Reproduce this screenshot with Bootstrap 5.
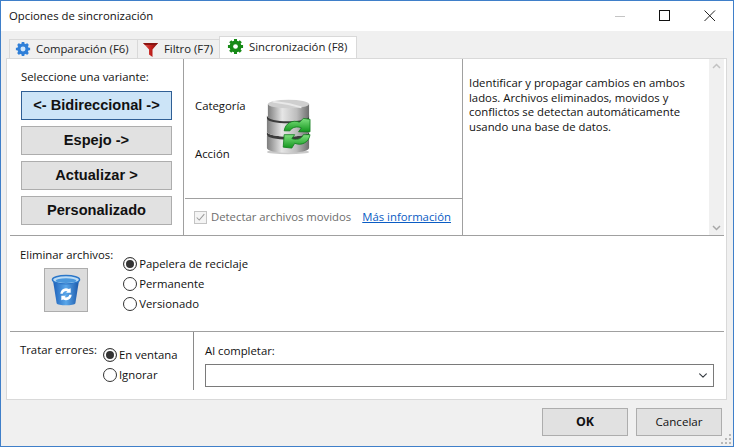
<!DOCTYPE html>
<html lang="es">
<head>
<meta charset="utf-8">
<title>Opciones de sincronización</title>
<link href="https://cdn.jsdelivr.net/npm/bootstrap@5.3.0/dist/css/bootstrap.min.css" rel="stylesheet">
<style>
html,body{margin:0;height:447px;overflow:hidden;background:#f0f0f0}
body{font-family:"Open Sans","Noto Sans","Liberation Sans",sans-serif;font-size:11.34px;color:#111;line-height:16px}
.win{width:734px;height:447px;border:1px solid #3f7fc9;background:#f0f0f0}
.titlebar{height:30px;background:#fff;padding-left:8px}
.winbtns{gap:33px;padding-right:17px}
.tabstrip{height:27px;padding-left:8px}
.tabx{height:19px;background:#f0f0f0;border:1px solid #d9d9d9;border-bottom:0;margin-right:-1px;color:#222;gap:4px;padding:0 4px}
.tabx.one{width:129px}
.tabx.two{width:83px;gap:5px}
.tabx.act{width:138px;height:22px;background:#fff;z-index:1;padding:0 6px 2px 7px;gap:5px}
.panel{margin:0 6px 0 5px;height:342px;background:#fff;border:1px solid #d9d9d9}
.toprow{height:176px}
.leftcol{width:177px;border-right:1px solid #a0a0a0;padding:10px 0 0 14px}
.seltitle{height:18px}
.varbtn{width:151px;height:29px;background:#e1e1e1;border:1px solid #adadad;border-radius:0;font:700 14.6px/1 "Liberation Sans",Arial,sans-serif;color:#111;margin-bottom:6px;padding:0}
.varbtn.on{background:#cce4f7;border-color:#2f5f95}
.midcol{width:279px;border-right:1px solid #a0a0a0}
.midtop{height:139px;padding:31px 0 0 11px}
.catlabels{width:70px;gap:32px;padding-top:8px}
.dbicon{margin-top:9px}
.midbot{height:37px;border-top:1px solid #a0a0a0;margin-left:1px;padding-left:9px}
.chk{width:13px;height:13px;border:1px solid #c4c4c4;background:#f4f4f4;margin-right:4px}
.dim{color:#6d6d6d}
.morelink{color:#0a5cc4;margin-left:11px;text-decoration:underline}
.rightcol{width:262px}
.desc{padding:17px 0 0 6px;width:246px;line-height:14.7px}
.vscroll{width:15px;background:#f0f0f0;padding:4px 0}
.rule{height:1px;background:#a0a0a0;margin:0 2px 0 3px}
.delrow{height:95px;padding:11px 0 0 13px}
.binbox{width:44px;height:44px;background:#dcdcdc;border:1px solid #adadad;margin:5px 0 0 24px}
.radiocol{padding:7px 0 0 10px}
.radioitem{height:20px;gap:2px}
.radiox{width:14px;height:14px;margin:0;flex:none;border:1px solid #333;background:#fff;border-radius:50%;appearance:none}
.radiox:checked{box-shadow:inset 0 0 0 2px #fff,inset 0 0 0 7px #333}
.botrow{height:63px}
.errcol{width:187px;padding:10px 0 0 13px;border-right:1px solid #8a8a8a;margin-bottom:5px}
.errradios{padding:3px 0 0 6px}
.endcol{padding:11px 0 0 11px}
.endsel{width:509px;height:23px;margin-top:5px;padding:0;border:1px solid #7a7a7a;border-radius:0;background-color:#fff;background-size:12px 9px;background-position:right 4px center;box-shadow:none}
.foot{height:46px;padding:8px 11px 0 0;position:relative}
.footbtn{width:86px;height:28px;background:#e1e1e1;border:1px solid #adadad;border-radius:0;font-size:11.6px;line-height:1;color:#111;padding:0;margin-left:8px}
.footbtn.pri{font-weight:700;font-size:12.4px}
.grip{position:absolute;right:1px;bottom:1px}
</style>
</head>
<body>
<div class="win d-flex flex-column">
  <div class="titlebar d-flex align-items-center justify-content-between">
    <span>Opciones de sincronización</span>
    <div class="winbtns d-flex align-items-center">
      <svg width="12" height="12" viewBox="0 0 12 12"><path d="M1 6.500h10" stroke="#c4c4c4"/></svg>
      <svg width="12" height="12" viewBox="0 0 12 12"><rect x=".5" y=".5" width="10" height="10" fill="none" stroke="#111"/></svg>
      <svg width="12" height="12" viewBox="0 0 12 12"><path d="M.5.5l10.500 10.500M11 .5L.5 11" stroke="#222" fill="none"/></svg>
    </div>
  </div>
  <div class="tabstrip d-flex align-items-end">
    <div class="tabx one d-flex align-items-center">
      <svg width="18" height="16" viewBox="0 0 18 18"><g fill="#2f7fd8"><circle cx="9" cy="9" r="6.400"/><g stroke="#2f7fd8" stroke-width="3"><path d="M9 1v16M1 9h16M3.400 3.400l11.200 11.200M14.600 3.400L3.400 14.600"/></g></g><circle cx="9" cy="9" r="2.800" fill="#cfe6fb"/></svg>
      <span>Comparación (F6)</span>
    </div>
    <div class="tabx two d-flex align-items-center">
      <svg width="17" height="17" viewBox="0 0 17 17"><defs><linearGradient id="f" x1="0" x2="1" y1="0" y2="0"><stop offset="0" stop-color="#e8605a"/><stop offset=".55" stop-color="#c0201c"/><stop offset="1" stop-color="#7d1210"/></linearGradient></defs><path d="M1 2h15L10.500 8.500V16L7 13.500V8.500z" fill="url(#f)"/><path d="M1 2h15l-2 2H3z" fill="#8a1512"/></svg>
      <span>Filtro (F7)</span>
    </div>
    <div class="tabx act d-flex align-items-center">
      <svg width="17" height="17" viewBox="0 0 18 18"><circle cx="9" cy="9" r="6.300" fill="#178a17"/><g stroke="#178a17" stroke-width="3.200"><path d="M9 1v16M1 9h16M3.400 3.400l11.200 11.200M14.600 3.400L3.400 14.600"/></g><circle cx="9" cy="9" r="2.500" fill="#fff"/></svg>
      <span>Sincronización (F8)</span>
    </div>
  </div>
  <div class="panel d-flex flex-column">
    <div class="toprow d-flex">
      <div class="leftcol">
        <div class="seltitle mb-1">Seleccione una variante:</div>
        <button type="button" class="btn varbtn on d-block">&lt;- Bidireccional -&gt;</button>
        <button type="button" class="btn varbtn d-block">Espejo -&gt;</button>
        <button type="button" class="btn varbtn d-block">Actualizar &gt;</button>
        <button type="button" class="btn varbtn d-block">Personalizado</button>
      </div>
      <div class="midcol d-flex flex-column">
        <div class="midtop d-flex">
          <div class="catlabels d-flex flex-column"><span>Categoría</span><span>Acción</span></div>
          <svg class="dbicon" width="46" height="56" viewBox="0 0 48 58">
            <defs>
              <linearGradient id="m" x1="0" x2="1" y1="0" y2="0"><stop offset="0" stop-color="#7d7d7d"/><stop offset=".35" stop-color="#e6e6e6"/><stop offset=".7" stop-color="#bdbdbd"/><stop offset="1" stop-color="#6e6e6e"/></linearGradient>
              <linearGradient id="g" x1="0" x2="0" y1="0" y2="1"><stop offset="0" stop-color="#7fe07f"/><stop offset="1" stop-color="#12961c"/></linearGradient>
            </defs>
            <ellipse cx="24" cy="55" rx="22" ry="2.500" fill="#c9c9c9"/>
            <path d="M2 38h44v13c0 3-10 5-22 5S2 54 2 51z" fill="url(#m)"/>
            <path d="M2 37c0 3 10 5 22 5s22-2 22-5v-3c0 3-10 5-22 5S2 37 2 34z" fill="#3b3b3b"/>
            <path d="M2 21h44v13c0 3-10 5-22 5S2 37 2 34z" fill="url(#m)"/>
            <path d="M2 20c0 3 10 5 22 5s22-2 22-5v-3c0 3-10 5-22 5S2 20 2 17z" fill="#3b3b3b"/>
            <path d="M3 5h43v13c0 3-10 5-22 5S3 21 3 18z" fill="url(#m)"/>
            <ellipse cx="24.500" cy="5" rx="21.500" ry="4.500" fill="#cfcfcf"/>
            <path d="M24.500 5L8 2.500M24.500 5L38 8.500" stroke="#e9e9e9" stroke-width="2"/>
            <path d="M20 33c1-8 9-12 16-9l4-4 7 1v13H35l3-4c-4-2-10-1-12 3z" fill="url(#g)" stroke="#0b7a17" stroke-width=".8"/>
            <path d="M47 37c-1 8-9 12-16 9l-3 5-9-1 1-13h11l-3 4c4 2 10 1 12-4z" fill="url(#g)" stroke="#0b7a17" stroke-width=".8"/>
          </svg>
        </div>
        <div class="midbot d-flex align-items-center">
          <svg class="chk" viewBox="0 0 13 13"><path d="M2 6.500l3 3 6-7" fill="none" stroke="#9a9a9a" stroke-width="1.200"/></svg>
          <span class="dim">Detectar archivos movidos</span>
          <a class="morelink" href="#">Más información</a>
        </div>
      </div>
      <div class="rightcol d-flex">
        <div class="desc">Identificar y propagar cambios en ambos lados. Archivos eliminados, movidos y conflictos se detectan automáticamente usando una base de datos.</div>
        <div class="vscroll d-flex flex-column justify-content-between align-items-center">
          <svg width="9" height="6" viewBox="0 0 9 6"><path d="M1 5l3.500-3.500L8 5" fill="none" stroke="#c2c2c2" stroke-width="1.500"/></svg>
          <svg width="9" height="6" viewBox="0 0 9 6"><path d="M1 1l3.500 3.500L8 1" fill="none" stroke="#a8a8a8" stroke-width="1.500"/></svg>
        </div>
      </div>
    </div>
    <div class="rule"></div>
    <div class="delrow d-flex">
      <div>
        <div>Eliminar archivos:</div>
        <div class="binbox d-flex align-items-center justify-content-center">
          <svg width="30" height="34" viewBox="0 0 32 36">
            <defs><linearGradient id="b" x1="0" x2="1" y1="0" y2="0"><stop offset="0" stop-color="#1c5fb8"/><stop offset=".5" stop-color="#5aa7ea"/><stop offset="1" stop-color="#1a56a8"/></linearGradient></defs>
            <path d="M2 7l4 25c1 3 19 3 20 0l4-25z" fill="url(#b)"/>
            <ellipse cx="16" cy="7" rx="14.500" ry="4.500" fill="#bcdcf5" stroke="#2b76c8" stroke-width="1.500"/>
            <ellipse cx="16" cy="8" rx="11" ry="2.500" fill="#4a97dc"/>
            <path d="M10 22a6 6 0 0 1 9-5l2-1v5h-5l1.500-1.500a3.500 3.500 0 0 0-5 2.500zM22 23a6 6 0 0 1-9 5l-2 1v-5h5l-1.500 1.500a3.500 3.500 0 0 0 5-2.500z" fill="#fff"/>
          </svg>
        </div>
      </div>
      <div class="radiocol">
        <label class="radioitem d-flex align-items-center"><input class="radiox" type="radio" name="d" checked><span>Papelera de reciclaje</span></label>
        <label class="radioitem d-flex align-items-center"><input class="radiox" type="radio" name="d"><span>Permanente</span></label>
        <label class="radioitem d-flex align-items-center"><input class="radiox" type="radio" name="d"><span>Versionado</span></label>
      </div>
    </div>
    <div class="rule"></div>
    <div class="botrow d-flex">
      <div class="errcol d-flex">
        <div>Tratar errores:</div>
        <div class="errradios">
          <label class="radioitem d-flex align-items-center"><input class="radiox" type="radio" name="e" checked><span>En ventana</span></label>
          <label class="radioitem d-flex align-items-center"><input class="radiox" type="radio" name="e"><span>Ignorar</span></label>
        </div>
      </div>
      <div class="endcol">
        <div>Al completar:</div>
        <select class="form-select endsel" aria-label="Al completar"><option></option></select>
      </div>
    </div>
  </div>
  <div class="foot d-flex justify-content-end align-items-start">
    <button type="button" class="btn footbtn pri">OK</button>
    <button type="button" class="btn footbtn">Cancelar</button>
    <svg class="grip" width="11" height="11" viewBox="0 0 11 11"><g fill="#b8b8b8"><rect x="8" y="0" width="2" height="2"/><rect x="4" y="4" width="2" height="2"/><rect x="8" y="4" width="2" height="2"/><rect x="0" y="8" width="2" height="2"/><rect x="4" y="8" width="2" height="2"/><rect x="8" y="8" width="2" height="2"/></g></svg>
  </div>
</div>
<script src="https://cdn.jsdelivr.net/npm/bootstrap@5.3.0/dist/js/bootstrap.bundle.min.js"></script>
</body>
</html>
